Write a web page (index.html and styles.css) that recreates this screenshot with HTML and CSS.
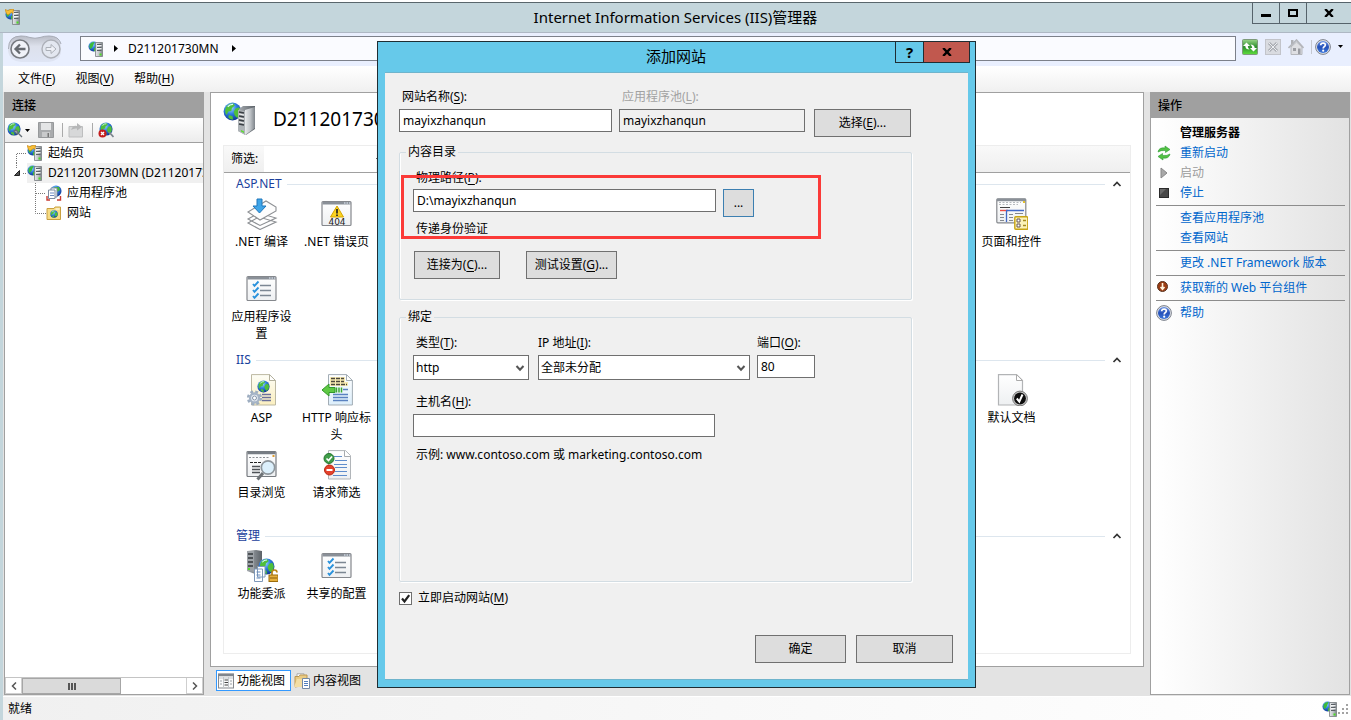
FILE: index.html
```html
<!DOCTYPE html>
<html lang="zh-CN">
<head>
<meta charset="utf-8">
<title>Internet Information Services (IIS)管理器</title>
<link rel="stylesheet" href="styles.css">
</head>
<body>
<svg class="defs" aria-hidden="true">
  <defs>
    <radialGradient id="gGlobe" cx=".4" cy=".3" r=".75"><stop offset="0" stop-color="#9fdcff"/><stop offset=".45" stop-color="#2f7fe0"/><stop offset="1" stop-color="#0b2f8c"/></radialGradient>
    <linearGradient id="gTower" x1="0" x2="1" y1="0" y2="0"><stop offset="0" stop-color="#e8eaec"/><stop offset=".5" stop-color="#c2c6ca"/><stop offset="1" stop-color="#7e848a"/></linearGradient>
    <linearGradient id="gDark" x1="0" x2="1" y1="0" y2="0"><stop offset="0" stop-color="#a8adb2"/><stop offset="1" stop-color="#5c6268"/></linearGradient>
    <linearGradient id="gPage" x1="0" x2="0" y1="0" y2="1"><stop offset="0" stop-color="#ffffff"/><stop offset="1" stop-color="#eef0f2"/></linearGradient>
    <linearGradient id="gCream" x1="0" x2="0" y1="0" y2="1"><stop offset="0" stop-color="#fdfdf6"/><stop offset="1" stop-color="#fbefc0"/></linearGradient>
    <linearGradient id="gBluePage" x1="0" x2="0" y1="0" y2="1"><stop offset="0" stop-color="#ffffff"/><stop offset="1" stop-color="#dceefb"/></linearGradient>
    <linearGradient id="gHelp" x1="0" x2="0" y1="0" y2="1"><stop offset="0" stop-color="#6c94e4"/><stop offset=".5" stop-color="#2450b8"/><stop offset="1" stop-color="#3d78dc"/></linearGradient>
    <linearGradient id="gPill" x1="0" x2="0" y1="0" y2="1"><stop offset="0" stop-color="#b9bcc6"/><stop offset=".4" stop-color="#dde1ec"/><stop offset="1" stop-color="#dfe5f4"/></linearGradient>
    <linearGradient id="gGreen" x1="0" x2="0" y1="0" y2="1"><stop offset="0" stop-color="#9ad68a"/><stop offset=".5" stop-color="#2c8f2c"/><stop offset="1" stop-color="#5ee03c"/></linearGradient>
  </defs>
  <symbol id="globe" viewBox="0 0 16 16">
    <circle cx="8" cy="8" r="7.5" fill="url(#gGlobe)"/>
    <path d="M3 3.5Q6 .5 9 1.5L10 3 7.5 5 7 7.5 4.500 8 3 11Q.6 8 3 3.500ZM10.500 5.500L13.500 4.500Q15.500 7 14.500 10.500L12 13.500 10 11.500 9 8.500ZM5 11L8 12 8.500 15Q5.500 14.500 4.500 13Z" fill="#4fbf3a"/>
    <path d="M4 4Q6 1.700 8.500 2" fill="none" stroke="#d8f6ff" stroke-width="1"/>
  </symbol>
  <symbol id="server" viewBox="0 0 16 16">
    <circle cx="5.500" cy="5.500" r="5" fill="url(#gGlobe)"/>
    <path d="M2 3Q4 .6 6.500 1L5.500 3.500 4.500 6 2.500 8Q.6 6 2 3ZM6 7L8 6.500V10L6 10.300Z" fill="#3dbb3a"/>
    <path d="M7.500 1.500H14.500V15.500H7.500Z" fill="url(#gTower)" stroke="#787d82" stroke-width=".8"/>
    <path d="M9 3.500H13.500M9 6.500H13.500M9 9.500H13.500" stroke="#5a6066" stroke-width="1"/>
    <path d="M9 4.500H13.500M9 7.500H13.500" stroke="#fff" stroke-width=".8"/>
    <rect x="11.500" y="12.500" width="2" height="2" fill="#4be020"/>
  </symbol>
  <symbol id="startpage" viewBox="0 0 16 16">
    <use href="#server"/>
    <path d="M0 .5L3 1.500 5 .5 8.500 0 8 4.500 6.500 3.500 3 6 1.500 4.500Z" fill="#f8bf36" stroke="#c98208" stroke-width=".6"/>
  </symbol>
  <symbol id="help" viewBox="0 0 16 16">
    <circle cx="8" cy="8" r="7.400" fill="#dfe3ea" stroke="#7d828c" stroke-width="1"/>
    <circle cx="8" cy="8" r="6" fill="url(#gHelp)"/>
    <path d="M5.700 6.300Q5.800 4 8.200 4 10.400 4.100 10.300 6 10.200 7.200 8.900 7.900 8.200 8.400 8.200 9.600" fill="none" stroke="#fff" stroke-width="1.700"/>
    <circle cx="8.200" cy="11.700" r="1.100" fill="#fff"/>
  </symbol>
  <symbol id="chev" viewBox="0 0 10 6"><path d="M1.500 5L5 1.500 8.500 5" fill="none" stroke="#333" stroke-width="1.700"/></symbol>
  <symbol id="caret" viewBox="0 0 5 3"><path d="M0 0H5L2.500 3Z" fill="#000"/></symbol>
  <symbol id="checklist" viewBox="0 0 32 32">
    <rect x="1" y="3.500" width="29" height="24" rx="1" fill="url(#gPage)" stroke="#85888d" stroke-width="1.200"/>
    <rect x="1.500" y="4" width="28" height="2.500" fill="#8a9098"/><path d="M23 5H24.500M25.500 5H27M28 5H29" stroke="#e8f2ff"/>
    <path d="M7 11L8.500 12.800 12.500 8.500M7 17L8.500 18.800 12.500 14.500M7 23L8.500 24.800 12.500 20.500" fill="none" stroke="#2a92dc" stroke-width="1.900"/>
    <path d="M14 12.500H25M14 17.500H25M14 22.500H25" stroke="#7c8793" stroke-width="1.300"/>
  </symbol>
  <symbol id="close-x" viewBox="0 0 10 8"><path d="M1.200 0L8.800 8M8.800 0L1.200 8" stroke="#000" stroke-width="2.400"/></symbol>
</svg>

<header class="titlebar">
  <svg class="i16"><use href="#startpage"/></svg>
  <h1>Internet Information Services (IIS)管理器</h1>
  <div class="winbtns">
    <button aria-label="最小化"><svg width="10" height="10"><path d="M0 6H10V9H0Z"/></svg></button>
    <button aria-label="最大化"><svg width="10" height="10"><path d="M1 2H9V8H1Z" fill="none" stroke="#000" stroke-width="2"/></svg></button>
    <button class="wide" aria-label="关闭"><svg width="10" height="8"><use href="#close-x"/></svg></button>
  </div>
</header>

<div class="window">
  <nav class="navbar">
    <svg class="history" width="56" height="28" viewBox="0 0 56 28">
      <path d="M1 14Q1 1 14 1 19 1 23 2.500 28 4 33 2.500 37 1 42 1 54 1 54 14V18Q52 26 42 27H14Q2 26 1 16Z" fill="url(#gPill)"/>
      <path d="M1.500 14Q1.500 1 14 1 19 1 23 2.500 28 4 33 2.500 37 1 42 1 52 1 54 9" fill="none" stroke="#a7abb6"/>
      <circle cx="13" cy="14" r="9" fill="#f0f2f8" stroke="#777a80" stroke-width="1.600"/>
      <path d="M18.500 14H9M13 9.500L8.500 14 13 18.500" fill="none" stroke="#666a70" stroke-width="2.300"/>
      <circle cx="44" cy="14" r="9" fill="#e3e7f0" stroke="#adb0b8" stroke-width="1.400"/>
      <path d="M39 12.500H44V9.500L49 14 44 18.500V15.500H39Z" fill="#eef0f6" stroke="#acb0b8"/>
    </svg>
    <div class="address">
      <svg class="i16"><use href="#server"/></svg>
      <svg width="4" height="7"><path d="M0 0L4 3.500 0 7Z"/></svg>
      <span>D211201730MN</span>
      <svg width="4" height="7"><path d="M0 0L4 3.500 0 7Z"/></svg>
    </div>
    <div class="navicons">
      <svg class="i16" viewBox="0 0 16 16"><rect x=".5" y=".5" width="15" height="15" rx="1" fill="url(#gGreen)" stroke="#7d9a7a"/><path d="M1 7L4.500 3.500 8 7H5.800Q5.800 9 7.500 10.500 3.500 10.500 3.300 7ZM15 9L11.500 12.500 8 9H10.200Q10.200 7 8.500 5.500 12.500 5.500 12.700 9Z" fill="#fff"/></svg>
      <svg class="i16" viewBox="0 0 16 16"><rect x=".5" y=".5" width="15" height="15" fill="#d9dbe0" stroke="#c2c4ca"/><path d="M4 4L12 12M12 4L4 12" stroke="#a9acb2" stroke-width="3"/><path d="M4 4L12 12M12 4L4 12" stroke="#eceef2"/></svg>
      <svg class="i16" viewBox="0 0 16 16"><path d="M3 1H5.500V5H3Z" fill="#aeb0b5"/><path d="M3 8L8.500 3 14 8V15.500H3Z" fill="#dedfe3" stroke="#b5b7bc"/><path d="M.5 9L8.500 1 15.500 9" fill="none" stroke="#b4b6bb" stroke-width="1.600"/><path d="M5 9H8V12H5ZM10 9.500H12.500V15H10Z" fill="#9b9da3"/></svg>
      <i class="vbar"></i>
      <svg class="i16"><use href="#help"/></svg>
      <svg width="5" height="3"><use href="#caret"/></svg>
    </div>
  </nav>

  <nav class="menubar">
    <button>文件(<u>F</u>)</button><button>视图(<u>V</u>)</button><button>帮助(<u>H</u>)</button>
  </nav>

  <main class="workspace">
    <aside class="panel connections">
      <h2>连接</h2>
      <div class="toolbar">
        <div class="split">
          <svg class="i16" viewBox="0 0 16 16"><use href="#globe" width="14" height="14"/><path d="M7 9L9 8 11 10 10 12ZM11 11L15 15" fill="#b8bec4" stroke="#667078" stroke-width="1.300"/></svg>
          <svg width="5" height="3"><use href="#caret"/></svg>
        </div>
        <svg class="i16" viewBox="0 0 16 16"><path d="M.5.5H15.500V15.500H.5Z" fill="#a9abad" stroke="#97999b"/><path d="M3 1H13V8H3Z" fill="#e4e5e6"/><path d="M4 10H12V15H4Z" fill="#c9cacb"/><path d="M9.500 11H11V15H9.500Z" fill="#777"/></svg>
        <i class="vbar"></i>
        <svg class="i16" viewBox="0 0 16 16"><path d="M1 4.500H14.500V15H1Z" fill="#d7d8d9" stroke="#bdbebf"/><path d="M3 8Q5 2.500 9 4V1L14 5 9 8.500V6.500Q6 6 3 8Z" fill="#b6b7b8"/></svg>
        <i class="vbar"></i>
        <svg class="i16" viewBox="0 0 16 16"><use href="#globe" x="1" width="14" height="14"/><path d="M11 10L15.500 15" stroke="#7c868e" stroke-width="1.800"/><circle cx="4.500" cy="11.500" r="4" fill="#c51d1d"/><path d="M3 10L6 13M6 10L3 13" stroke="#fff" stroke-width="1.400"/></svg>
      </div>
      <ul class="tree">
        <li><svg width="18" height="20"><path class="dots" d="M7.500 20V10.500H18"/></svg><svg class="i16"><use href="#startpage"/></svg><span>起始页</span></li>
        <li><svg width="18" height="20"><path d="M10.500 7.500V12.500H5.500Z" fill="#555" stroke="#222"/><path class="dots" d="M7.500 0V5M14 10.500H18"/></svg><div class="selected"><svg class="i16"><use href="#server"/></svg><span>D211201730MN (D211201730MN\Administrator)</span></div></li>
        <li class="child"><svg width="18" height="20"><path class="dots" d="M7.500 0V20M8 10.500H18"/></svg><svg class="i16" viewBox="0 0 16 16"><circle cx="10" cy="6" r="5.500" fill="url(#gGlobe)"/><path d="M8 2L13 2 14 5 11 7Z" fill="#46b83b"/><path d="M5 3H11V12H5Z" fill="#fff" stroke="#7d8ba0"/><path d="M2.500 5H9V13.500H2.500Z" fill="#fff" stroke="#7d8ba0"/><path d="M4 8H8M4 10.500H8" stroke="#6d8bc0"/><path d="M1 11V15H4M14.500 11V15H11" fill="none" stroke="#c93b32" stroke-width="1.400"/></svg><span>应用程序池</span></li>
        <li class="child"><svg width="18" height="20"><path class="dots" d="M7.500 0V10.500H18"/></svg><svg class="i16" viewBox="0 0 16 16"><path d="M1 3.500H8L9 2H14.500V14.500H1Z" fill="#f7dc84" stroke="#c9a040"/><path d="M9.500 4H13.500" stroke="#fff"/><use href="#globe" x="4" y="5" width="8" height="8"/></svg><span>网站</span></li>
      </ul>
      <div class="hscroll">
        <button aria-label="向左滚动"><svg width="6" height="8"><path d="M5 .5L1.500 4 5 7.500" fill="none" stroke="#555" stroke-width="1.500"/></svg></button>
        <div class="thumb"><svg width="8" height="7"><path d="M1 0V7M4 0V7M7 0V7" stroke="#555" stroke-width="2"/></svg></div>
        <div class="track"></div>
        <button aria-label="向右滚动"><svg width="6" height="8"><path d="M1 .5L4.500 4 1 7.500" fill="none" stroke="#555" stroke-width="1.500"/></svg></button>
      </div>
    </aside>

    <section class="center">
      <div class="panel features">
        <div class="pagehead">
          <svg width="34" height="34" viewBox="0 0 34 34"><use href="#globe" x="0" y="0" width="19" height="19"/><path d="M16 7L20 4H32V27L23 33 15 29Z" fill="url(#gDark)"/><path d="M15 8L22 9V33L15 29Z" fill="#aeb3b7"/><path d="M22 8L32 5V26L22 33Z" fill="url(#gTower)"/><path d="M16 10L21 11M16 14L21 15M16 18L21 19M16 22L21 23" stroke="#3a3f44" stroke-width="1.600"/><path d="M16 12L21 13M16 16L21 17M16 20L21 21" stroke="#eee"/><path d="M18 28L21 29.500V31L18 29.500Z" fill="#57df2c"/></svg>
          <h2>D211201730MN 主页</h2>
        </div>
        <div class="featurebox">
          <div class="filter">
            <label for="flt">筛选:</label><input id="flt" type="text"><svg width="5" height="3"><use href="#caret"/></svg>
          </div>

          <section class="group">
            <h3><span>ASP.NET</span><i></i><svg width="10" height="6"><use href="#chev"/></svg></h3>
            <div class="items">
              <div class="item"><svg class="i32" viewBox="0 0 32 32"><path d="M2 25L13 19 30 24 14 31.500ZM2 21L13 15 30 20 14 27.500Z" fill="#fff" stroke="#8d9094" stroke-width="1.100"/><path d="M2 14L20 3 30 9 30 13 14 22Z" fill="#fdfdfd" stroke="#8d9094" stroke-width="1.100"/><path d="M11 1H16V8H20L13.500 15 7 8H11Z" fill="#3fa5e8" stroke="#1f76bb"/></svg><span>.NET 编译</span></div>
              <div class="item"><svg class="i32" viewBox="0 0 32 32"><rect x="1" y="3.500" width="29" height="24" rx="1" fill="url(#gPage)" stroke="#85888d" stroke-width="1.200"/><rect x="1.500" y="4" width="28" height="2.500" fill="#8a9098"/><path d="M23 5H24.500M25.500 5H27M28 5H29" stroke="#e8f2ff"/><path d="M16 8L22.500 19H9.500Z" fill="#fbd31f" stroke="#d5a500" stroke-linejoin="round"/><path d="M16 11V15.500M16 16.500V18" stroke="#222" stroke-width="1.700"/><text x="16" y="26.500" text-anchor="middle" class="t404">404</text></svg><span>.NET 错误页</span></div>
              <div class="item last"><svg class="i32" viewBox="0 0 32 32"><rect x=".8" y=".8" width="29" height="24" rx="1" fill="url(#gPage)" stroke="#85888d" stroke-width="1.200"/><path d="M1 2H30" stroke="#8a9098" stroke-width="2.500"/><path d="M3 4.500H25M3 6.500H22" stroke="#b6babe" stroke-dasharray="2 1.500"/><path d="M27 4H29" stroke="#e4c02c" stroke-width="2"/><path d="M4 9.500H14" stroke="#444"/><path d="M4 12.500H12" stroke="#ef4c43" stroke-width="1.400"/><path d="M10 12.500H28M10.500 13V24" stroke="#4268c7" stroke-width="1.300"/><path d="M4 16.500H8M4 19.500H8M4 22.500H8M13 16.500H17M13 19.500H17M13 22.500H17M19 15.500H27" stroke="#83888e" stroke-width="1.200"/><rect x="18.800" y="18.800" width="13" height="12.500" rx="1" fill="#fbf2b8" stroke="#c7a314" stroke-width="1.400"/><path d="M21 21H24V24H21ZM21 26H24V29H21Z" fill="#fff" stroke="#655" /><path d="M27 22.500H30M27 27.500H30" stroke="#a48a1c" stroke-width="1.300"/></svg><span>页面和控件</span></div>
              <div class="item first"><svg class="i32"><use href="#checklist"/></svg><span>应用程序设置</span></div>
            </div>
          </section>

          <section class="group">
            <h3><span>IIS</span><i></i><svg width="10" height="6"><use href="#chev"/></svg></h3>
            <div class="items">
              <div class="item"><svg class="i32" viewBox="0 0 32 32"><path d="M5.500.6H23.500L29.500 6.500V31H5.500Z" fill="url(#gCream)" stroke="#bdb9a2"/><path d="M23.500.6V6.500H29.500Z" fill="#fff" stroke="#b3b09c"/><use href="#globe" x="11" y="6" width="13" height="13"/><path d="M16 20.500H25M16 23.500H25M16 26.500H25" stroke="#6a6f9a" stroke-width="1.300"/><circle cx="8.500" cy="24" r="6.300" fill="none" stroke="#9dadc0" stroke-width="2.600" stroke-dasharray="2.800 2.150"/><circle cx="8.500" cy="24" r="4.500" fill="#e8eef4" stroke="#a5b4c6" stroke-width="2.300"/><circle cx="8.500" cy="24" r="2" fill="#fff" stroke="#8494a8"/></svg><span>ASP</span></div>
              <div class="item"><svg class="i32" viewBox="0 0 32 32"><path d="M7.500.6H25.500L31.400 6.500V31H7.500Z" fill="url(#gBluePage)" stroke="#a3adb5"/><path d="M25.500.6V6.500H31.400Z" fill="#fff" stroke="#a3adb5"/><path d="M9 3H24V8H27V12H9Z" fill="#faedb4"/><path d="M10 4.500H23M10 7.500H23M10 10.500H26" stroke="#4c473c" stroke-width="1.300" stroke-dasharray="4 1"/><path d="M22 15.500H27M12 20.500H27M12 23.500H27M12 26.500H27" stroke="#5a82c0" stroke-width="1.300"/><path d="M1 16L8 10V13.500H14V18.500H8V22Z" fill="#5fc944" stroke="#32982a"/><path d="M15.500 13.500V18.500M18 13.500V18.500M20.500 13.500V18.500" stroke="#3ba92f" stroke-width="1.500"/></svg><span>HTTP 响应标头</span></div>
              <div class="item"><svg class="i32" viewBox="0 0 32 32"><path d="M7.500.6H25.500V31H7.500Z" fill="url(#gPage)" stroke="#a3adb5"/><rect x="2" y="12" width="12" height="8" fill="#b96a12" stroke="#3c2204"/></svg><span class="single">ISAPI 筛选器</span></div>
              <div class="item last"><svg class="i32" viewBox="0 0 32 32"><path d="M2.500.6H20.500L26.500 6.500V31H2.500Z" fill="url(#gPage)" stroke="#b2b4b6" stroke-width="1.200"/><path d="M20.500.6V6.500H26.500Z" fill="#fff" stroke="#aaa"/><circle cx="24" cy="24.500" r="7.400" fill="#c8c8c8" stroke="#777"/><circle cx="24" cy="24.500" r="5.900" fill="#0c0c0c"/><path d="M20.800 24.500L23.300 27.600 26.500 20.500" fill="none" stroke="#fff" stroke-width="2"/></svg><span>默认文档</span></div>
              <div class="item first"><svg class="i32" viewBox="0 0 32 32"><rect x="1" y="2.500" width="29" height="25" rx="1" fill="url(#gPage)" stroke="#777b80" stroke-width="1.200"/><path d="M1.500 4H29.500" stroke="#777d84" stroke-width="2.500"/><path d="M3 8.500H24" stroke="#8b8f94" stroke-dasharray="2 1.500"/><path d="M26.500 7H28.500" stroke="#df9b2c" stroke-width="2"/><path d="M4 13.500H16" stroke="#222" stroke-dasharray="3 1"/><path d="M6 17.500H14M6 20.500H14M6 23.500H14" stroke="#4d5156" stroke-width="1.300"/><path d="M17 24L11.500 30.500" stroke="#6d7276" stroke-width="3"/><circle cx="22" cy="18.500" r="6.700" fill="#dcf0fc" stroke="#8e969c" stroke-width="1.700"/></svg><span>目录浏览</span></div>
              <div class="item"><svg class="i32" viewBox="0 0 32 32"><path d="M7.500 1.600H24.500L29.500 6.500V30H7.500Z" fill="url(#gPage)" stroke="#b1b5b9"/><path d="M23.500 1.600V7.500H29.500" fill="#fff" stroke="#a7abaf"/><path d="M13 7.500H21M14 11.500H26M13 15.500H26M14 18.500H26M14 22.500H26M12 26.500H26" stroke="#5f8dcc" stroke-width="1.200"/><circle cx="8" cy="9.500" r="5" fill="#3f9d49" stroke="#25742f"/><path d="M5.500 9.500L7.500 11.500 11 7.500" fill="none" stroke="#fff" stroke-width="1.700"/><circle cx="8.500" cy="21" r="5" fill="#e5412c" stroke="#b9260f"/><path d="M5.500 21H11.500" stroke="#fff" stroke-width="2"/></svg><span>请求筛选</span></div>
            </div>
          </section>

          <section class="group">
            <h3><span>管理</span><i></i><svg width="10" height="6"><use href="#chev"/></svg></h3>
            <div class="items">
              <div class="item"><svg class="i32" viewBox="0 0 32 32"><path d="M1 1L10 0 16 1V20L9 24 1 21Z" fill="url(#gDark)"/><path d="M1 1H8V22L1 20Z" fill="#9da2a7"/><path d="M2 4H7M2 8H7M2 12H7M2 16H7" stroke="#33383c" stroke-width="1.500"/><rect x="2" y="18" width="2" height="2" fill="#54dc27"/><use href="#globe" x="12" y="8" width="17" height="17"/><path d="M11.500 16.500H19V27H11.500ZM8.500 19H16.500V31.500H8.500Z" fill="#fff" stroke="#7e98b9"/><path d="M10.500 22H14.500M10.500 25H14.500M10.500 28H14.500" stroke="#6288bb"/><path d="M26 25V22.500Q26 20 28.500 20 31 20 31 22.500" fill="none" stroke="#b98616" stroke-width="1.700"/><rect x="23" y="25" width="9" height="6.500" fill="#e6b03b" stroke="#9b6c0c"/><path d="M24 28H31" stroke="#8a5c06"/></svg><span>功能委派</span></div>
              <div class="item"><svg class="i32"><use href="#checklist"/></svg><span>共享的配置</span></div>
            </div>
          </section>
        </div>
      </div>
      <div class="viewtabs">
        <button class="active"><svg class="i16" viewBox="0 0 16 16"><rect x=".5" y="1" width="15" height="14" fill="#fafafa" stroke="#85888d"/><path d="M0 2H16" stroke="#80858c" stroke-width="2.500"/><path d="M5.500 4V15M10.500 4V15M1 5H15" stroke="#c2c6ca"/><path d="M2 8H4M2 11H4M12 8H14M12 11H14" stroke="#9aa0a6"/><path d="M6.500 7H10M6.500 9.500H10M6.500 12H10" stroke="#444"/></svg>功能视图</button>
        <button><svg class="i16" viewBox="0 0 16 16"><path d="M3 .8H10V8H3Z" fill="#fff" stroke="#aaa"/><path d="M1 3.500H5L6 2H13V12L1 14Z" fill="#eacb83" stroke="#bb9753"/><path d="M0 14L3 6H8V14Z" fill="#f3dda4"/><path d="M8.500 5.500H15.500V15.500H8.500Z" fill="#fff" stroke="#7389a5"/><path d="M10 8.500H14M10 10.500H14M10 12.500H14" stroke="#537fbd"/></svg>内容视图</button>
      </div>
    </section>

    <aside class="panel actions">
      <h2>操作</h2>
      <div class="actionlist">
        <h3><i class="slot"></i>管理服务器</h3>
        <a href="#"><i class="slot"><svg class="i16" viewBox="0 0 16 16"><path d="M2 7Q3 2 9 3V1L14 4.500 9.500 7.500V5.500Q5 5 2 7ZM14 9Q13 14 7 13V15L2 11.500 6.500 8.500V10.500Q11 11 14 9Z" fill="#52c243" stroke="#2f9a37" stroke-width=".6"/></svg></i>重新启动</a>
        <a class="off"><i class="slot"><svg class="i16" viewBox="0 0 16 16"><path d="M5 3L11 8 5 13Z" fill="#a8a8a8" stroke="#888"/></svg></i>启动</a>
        <a href="#"><i class="slot"><svg class="i16" viewBox="0 0 16 16"><rect x="3.500" y="3.500" width="9" height="9" fill="#484848" stroke="#2b2b2b"/><path d="M4 10L10 4H4Z" fill="#6a6a6a"/></svg></i>停止</a>
        <hr>
        <a href="#"><i class="slot"></i>查看应用程序池</a>
        <a href="#"><i class="slot"></i>查看网站</a>
        <hr>
        <a href="#"><i class="slot"></i>更改 .NET Framework 版本</a>
        <hr>
        <a href="#"><i class="slot"><svg class="i16" viewBox="0 0 16 16"><circle cx="6.500" cy="6.500" r="5" fill="#9c3d14" stroke="#59331f"/><path d="M6.500 3V9M4.500 7L6.500 9.300 8.500 7" stroke="#fff3dc" fill="none" stroke-width="1.600"/></svg></i>获取新的 Web 平台组件</a>
        <hr>
        <a href="#"><i class="slot"><svg class="i16"><use href="#help"/></svg></i>帮助</a>
      </div>
    </aside>
  </main>

  <footer class="status">
    <span>就绪</span>
    <svg class="i16"><use href="#server"/></svg>
    <svg width="11" height="12" viewBox="0 0 11 12"><path d="M8 1H10V3H8ZM4 5H6V7H4ZM8 5H10V7H8ZM0 9H2V11H0ZM4 9H6V11H4ZM8 9H10V11H8Z" fill="#a3a3a3"/></svg>
  </footer>
</div>

<div class="dialog" role="dialog" aria-labelledby="dlgTitle">
  <div class="dlgbar">
    <h2 id="dlgTitle">添加网站</h2>
    <div class="dlgbtns">
      <button aria-label="帮助">?</button>
      <button class="close" aria-label="关闭"><svg width="10" height="8"><use href="#close-x"/></svg></button>
    </div>
  </div>
  <form class="dlgbody">
    <div class="dlgform">
      <div class="row">
        <div class="field name"><label for="site">网站名称(<u>S</u>):</label><input id="site" type="text" value="mayixzhanqun"></div>
        <div class="field pool"><label for="pool">应用程序池(<u>L</u>):</label><input id="pool" type="text" value="mayixzhanqun" readonly></div>
        <button type="button" class="btn b97">选择(<u>E</u>)...</button>
      </div>

      <fieldset class="content">
        <legend>内容目录</legend>
        <label for="path">物理路径(<u>P</u>):</label>
        <div class="pathrow"><input id="path" type="text" value="D:\mayixzhanqun"><button type="button" class="btn browse">...</button></div>
        <p>传递身份验证</p>
        <div class="testrow"><button type="button" class="btn b86">连接为(<u>C</u>)...</button><button type="button" class="btn b91">测试设置(<u>G</u>)...</button></div>
      </fieldset>

      <fieldset class="binding">
        <legend>绑定</legend>
        <div class="bindrow">
          <div class="field type"><label for="type">类型(<u>T</u>):</label><div class="combo"><select id="type"><option>http</option></select><svg width="10" height="7"><path d="M1.500 1L5 4.800 8.500 1" fill="none" stroke="#555" stroke-width="2"/></svg></div></div>
          <div class="field ip"><label for="ip">IP 地址(<u>I</u>):</label><div class="combo"><select id="ip"><option>全部未分配</option></select><svg width="10" height="7"><path d="M1.500 1L5 4.800 8.500 1" fill="none" stroke="#555" stroke-width="2"/></svg></div></div>
          <div class="field port"><label for="port">端口(<u>O</u>):</label><input id="port" type="text" value="80"></div>
        </div>
        <div class="field host"><label for="host">主机名(<u>H</u>):</label><input id="host" type="text"></div>
        <p>示例: www.contoso.com 或 marketing.contoso.com</p>
      </fieldset>

      <div class="check"><input type="checkbox" id="start" checked><svg width="13" height="13" viewBox="0 0 13 13"><path d="M3 6.500L5.500 9.500 10.200 3.200" fill="none" stroke="#222" stroke-width="2.200"/></svg><label for="start">立即启动网站(<u>M</u>)</label></div>
    </div>
    <div class="dlgfoot"><button type="button" class="btn b91">确定</button><button type="button" class="btn b97">取消</button></div>
  </form>
  <div class="highlight"></div>
</div>
</body>
</html>
```

FILE: styles.css
```css
* { box-sizing: border-box; }

body {
  margin: 0;
  height: 100vh;
  display: flex;
  flex-direction: column;
  overflow: hidden;
  position: relative;
  background: #c4d6dc;
  color: #000;
  font: 12px/16px "Noto Sans", "Noto Sans CJK SC", sans-serif;
}

h1, h2, h3, p, ul { margin: 0; padding: 0; font-size: 12px; font-weight: 400; }
button, input, select { font: inherit; color: inherit; border-radius: 0; }
button { padding: 0; border: 0; background: none; }
svg { display: block; flex: none; }
u { text-underline-offset: 2px; }

.defs { position: absolute; width: 0; height: 0; }
.i16 { width: 16px; height: 16px; }
.i32 { width: 32px; height: 32px; }
.vbar { width: 1px; height: 14px; background: #aaa; }

/* title bar */
.titlebar {
  display: flex;
  align-items: center;
  height: 33px;
  flex: none;
  padding: 0 0 1px 5px;
  border-top: 2px solid #fff;
  border-bottom: 1px solid #aeb8c4;
  box-shadow: inset 0 1px #59666c;
}
.titlebar h1 { flex: 1; padding-left: 78px; text-align: center; font-size: 15px; line-height: 24px; }
.winbtns { display: flex; align-self: flex-start; }
.winbtns button {
  display: grid;
  place-items: center;
  width: 27px;
  height: 22px;
  border: 1px solid #56636b;
  border-right: 0;
}
.winbtns .wide { width: 45px; }

.window { flex: 1; min-height: 0; display: flex; flex-direction: column; margin-left: 3px; background: #e3e3e3; }

/* navigation bar */
.navbar { display: flex; align-items: center; height: 33px; padding: 0 8px 2px 4px; background: #e9effe; }
.address {
  flex: 1;
  display: flex;
  align-items: center;
  gap: 10px;
  height: 25px;
  margin: 0 6px 0 17px;
  padding-left: 7px;
  border: 1px solid #7c808a;
  background: #fafbff;
}
.address span { margin-right: 3px; }
.navicons { display: flex; align-items: center; gap: 7px; padding-bottom: 4px; }
.navicons .vbar { background: #c5c8d0; }
.navicons .i16:nth-last-child(2) { margin-left: -4px; }

/* menu bar */
.menubar {
  display: flex;
  gap: 20px;
  height: 26px;
  padding-left: 15px;
  background: linear-gradient(#ffffff, #f0f0f0);
}

.workspace { flex: 1; min-height: 0; display: flex; gap: 6px; padding: 0 1px 1px 1px; }

.panel { border: 1px solid #a0a0a0; background: #fff; }
.panel > h2 { height: 25px; padding-left: 7px; line-height: 25px; font-weight: 500; background: #a0a0a0; }

/* connections */
.connections { width: 200px; flex: none; display: flex; flex-direction: column; }
.toolbar {
  display: flex;
  align-items: center;
  gap: 8px;
  height: 25px;
  padding-left: 2px;
  border-bottom: 1px solid #a0a0a0;
  background: linear-gradient(#ffffff, #ececec);
}
.toolbar .vbar { margin-right: -3px; }
.split { display: flex; align-items: center; gap: 2px; }
.tree { flex: 1; list-style: none; overflow: hidden; }
.tree li { display: flex; align-items: center; height: 20px; padding-left: 4px; white-space: nowrap; }
.tree span { padding-left: 5px; }
.tree .child { padding-left: 23px; }
.dots { fill: none; stroke: #777; stroke-dasharray: 1 1; }
.selected { display: flex; align-items: center; flex: 1; min-width: 0; height: 20px; background: #f0f0f0; overflow: hidden; }

.hscroll { display: flex; height: 17px; border-top: 1px solid #c4c4c4; }
.hscroll button { display: grid; place-items: center; width: 17px; border: 1px solid #cfcfcf; border-top: 0; }
.hscroll .thumb { display: grid; place-items: center; width: 99px; background: #dadada; border: 1px solid #a6a6a6; }
.hscroll .track { flex: 1; background: #fff; }

/* feature list */
.center { flex: 1; min-width: 0; display: flex; flex-direction: column; }
.features { flex: 1; min-height: 0; display: flex; flex-direction: column; padding: 0 12px; overflow: hidden; }
.pagehead { display: flex; align-items: center; gap: 16px; height: 52px; }
.features .pagehead h2 { font-size: 19px; line-height: 28px; }
.featurebox { flex: 1; min-height: 0; margin-bottom: 12px; border: 1px solid #ededed; }
.filter {
  display: flex;
  align-items: center;
  height: 27px;
  border-bottom: 1px solid #a0a0a0;
  background: linear-gradient(#f9f9f9, #efefef);
}
.filter label { width: 40px; padding-left: 7px; }
.filter input { width: 112px; height: 26px; border: 0; background: #fff; }

.group { height: 176px; }
.group h3 { display: flex; align-items: center; height: 22px; padding: 0 8px 0 12px; color: #1a3f9c; }
.group h3 i { flex: 1; height: 1px; margin: 0 7px 0 5px; background: #dde6ee; }
.items { display: grid; grid-template-columns: repeat(11, 75px); grid-auto-rows: 75px; padding-top: 3px; }
.item { display: flex; flex-direction: column; align-items: center; gap: 3px; text-align: center; line-height: 17px; }
.item span { width: 71px; }
.item .single { white-space: nowrap; }
.item.last { grid-column: 11; }
.item.first { grid-column: 1; }
.t404 { font: 9px "DejaVu Sans", sans-serif; fill: #222; }

.viewtabs { display: flex; height: 28px; padding: 3px 0 0 6px; align-items: flex-start; gap: 1px; }
.viewtabs button { display: flex; align-items: center; gap: 3px; height: 21px; padding: 0 5px 0 1px; border: 1px solid transparent; }
.viewtabs .active { border: 1px solid #3399ff; background: #fff; }

/* actions */
.actions { width: 200px; flex: none; background: linear-gradient(90deg, #ffffff 2%, #e2e2e2); }
.actionlist { padding: 5px 4px 0 5px; }
.actionlist h3, .actionlist a {
  display: flex;
  align-items: center;
  height: 20px;
  color: #0066cc;
  text-decoration: none;
  white-space: nowrap;
}
.actionlist h3 { color: #000; font-weight: 700; }
.actionlist .off { color: #9b9b9b; }
.actionlist hr { height: 1px; margin: 2px 0; border: 0; background: #8c8c8c; }
.slot { width: 24px; flex: none; }

.status {
  display: flex;
  align-items: center;
  height: 24px;
  padding: 1px 2px 0 5px;
  border-top: 1px solid #fff;
  background: linear-gradient(90deg, #f0f0f0, #ffffff);
}
.status span { flex: 1; }

/* add website dialog */
.dialog {
  position: absolute;
  left: 377px;
  top: 41px;
  width: 599px;
  padding: 0 7px 7px;
  border: 1px solid #1f2d33;
  background: #66c9ea;
}
.dlgbar { display: flex; height: 30px; padding-left: 72px; }
.dlgbar h2 { flex: 1; text-align: center; font-size: 15px; line-height: 28px; }
.dlgbtns { display: flex; height: 21px; margin-right: -2px; }
.dlgbtns button {
  display: grid;
  place-items: center;
  width: 28px;
  border: solid #1f2d33;
  border-width: 0 0 1px 1px;
  font: 700 15px/20px "Noto Sans", sans-serif;
}
.dlgbtns .close { width: 47px; border-right-width: 1px; background: #c1584e; }

.dlgbody { padding: 16px 15px 16px 14px; border: 1px solid #6fb4cc; border-width: 1px 0; background: #f0f0f0; }
.dlgform { padding-right: 41px; }
.dlgbody label { display: block; padding-left: 3px; }
.dlgbody input[type="text"] {
  display: block;
  width: 100%;
  height: 23px;
  padding: 0 3px 1px;
  border: 1px solid #6f6f6f;
  background: #fff;
}
.field label { margin-bottom: 4px; }
.row { display: flex; align-items: flex-end; }
.row .field { align-self: flex-start; }
.name { width: 213px; margin-right: 7px; }
.pool { width: 186px; margin-right: 9px; }
.pool label { color: #a2a2a2; }
.dlgbody .pool input { background: #f0f0f0; }

.btn { height: 28px; border: 1px solid #707070; background: #dddddd; text-align: center; }
.b86 { width: 86px; }
.b91 { width: 91px; }
.b97 { width: 97px; }
.row .btn { margin-top: 20px; }

fieldset {
  min-width: 0;
  margin: 0;
  border: 1px solid #d3dde3;
  border-radius: 2px;
  box-shadow: inset 1px 0 #fff, 1px 1px #fff;
}
legend { padding: 0 2px; margin-left: -7px; line-height: 16px; }
.content { margin-top: 7px; padding: 10px 13px 20px; }
.binding { margin-top: 9px; padding: 10px 13px 118px; }
fieldset p { padding-left: 3px; }

.pathrow { display: flex; gap: 7px; padding-top: 3px; }
.dlgbody .pathrow input { width: 303px; }
.browse { width: 31px; border-color: #3c7fb1; }
.content p { margin-top: 4px; }
.testrow { display: flex; gap: 26px; padding-left: 1px; margin-top: 14px; }

.bindrow { display: flex; }
.type { width: 116px; margin-right: 9px; }
.ip { width: 212px; margin-right: 7px; }
.port { width: 58px; }
.ip label, .port label { padding-left: 0; }
.combo { position: relative; }
.combo select { width: 100%; height: 25px; padding: 0 2px; border: 1px solid #6f6f6f; background: #fff; appearance: none; }
.combo svg { position: absolute; right: 4px; top: 10px; pointer-events: none; }
.host { width: 302px; margin-top: 14px; }
.binding p { margin-top: 10px; }

.check { position: relative; display: flex; align-items: center; gap: 3px; margin-top: 8px; }
.check input { width: 13px; height: 13px; margin: 0; border: 1px solid #6f6f6f; background: #fff; appearance: none; }
.check svg { position: absolute; left: 0; display: none; pointer-events: none; }
.check input:checked + svg { display: block; }

.dlgfoot { display: flex; justify-content: flex-end; gap: 10px; margin-top: 29px; }

.highlight { position: absolute; left: 23px; top: 133px; width: 420px; height: 64px; border: 3px solid #fb3a38; pointer-events: none; }
```
